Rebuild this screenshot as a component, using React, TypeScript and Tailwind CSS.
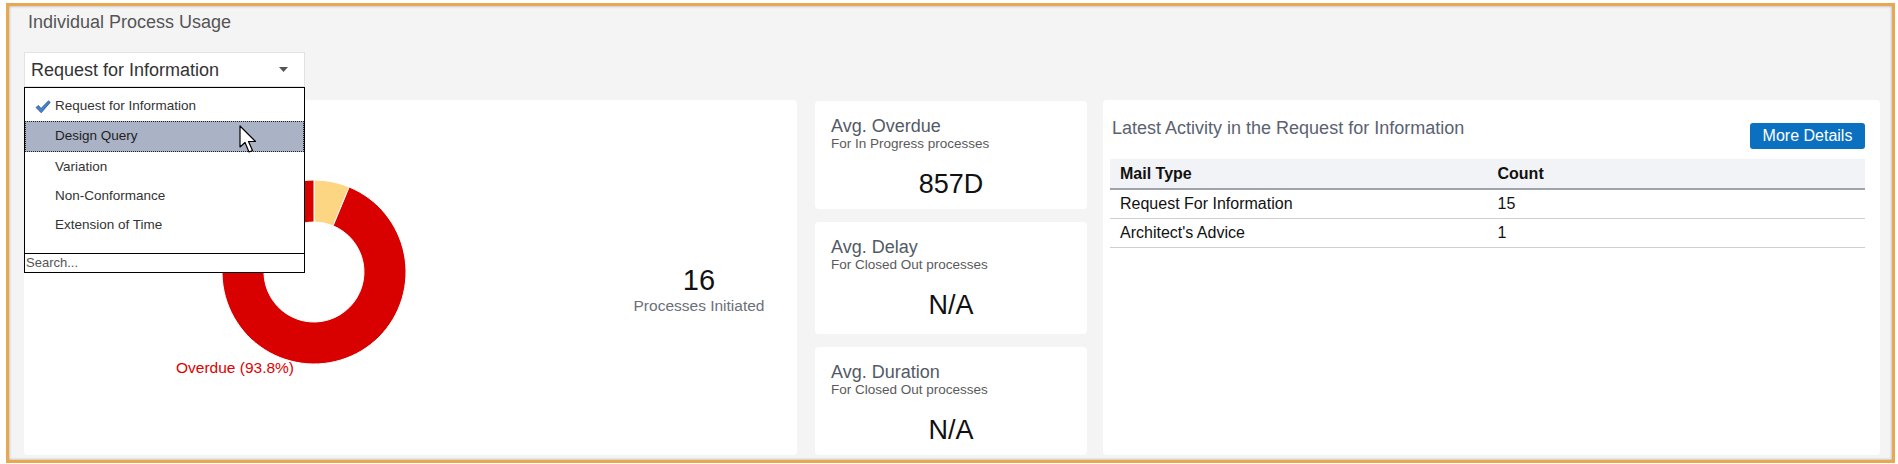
import React from "react";

const font = { fontFamily: '"Liberation Sans", Arial, sans-serif' };

const options = [
  "Request for Information",
  "Design Query",
  "Variation",
  "Non-Conformance",
  "Extension of Time",
];

const rows = [
  { type: "Request For Information", count: 15 },
  { type: "Architect's Advice", count: 1 },
];

const stats = [
  { title: "Avg. Overdue", sub: "For In Progress processes", value: "857D", h: "h-[108px]" },
  { title: "Avg. Delay", sub: "For Closed Out processes", value: "N/A", h: "h-[112px]" },
  { title: "Avg. Duration", sub: "For Closed Out processes", value: "N/A", h: "h-[108px]" },
];

function Check() {
  return (
    <svg width="16" height="14" viewBox="0 0 16 14" className="shrink-0">
      <path
        d="M1 7.5 L3.5 5.5 L6 8.5 L13.5 0.8 L15.2 2.4 L6.2 12.8 Z"
        fill="#4a7fcb"
        stroke="#2a579c"
        strokeWidth="0.8"
        strokeLinejoin="round"
      />
    </svg>
  );
}

function Cursor() {
  return (
    <svg width="20" height="30" viewBox="0 0 20 30" className="absolute left-[213px] top-[3px]">
      <path
        d="M1 1 L1 22 L6 17.5 L10 27 L13.5 25.5 L9.5 16.5 L16.5 16.5 Z"
        fill="#fff"
        stroke="#000"
        strokeWidth="1.2"
        strokeLinejoin="round"
      />
    </svg>
  );
}

function ProcessSelect() {
  return (
    <div className="relative w-[281px]">
      <div className="flex h-[35px] items-center justify-between border border-[#e2e2e2] bg-white pl-[6px] pr-[16px]">
        <span className="text-[18px] leading-[20px] text-[#333]">Request for Information</span>
        <svg width="9" height="5" viewBox="0 0 9 5">
          <path d="M0 0 L9 0 L4.5 5 Z" fill="#555" />
        </svg>
      </div>
      <div className="absolute left-0 top-[35px] z-10 w-[281px] border border-black bg-white">
        <div className="pt-[4px] text-[13.5px] text-[#333]">
          <div className="flex h-[29px] items-center gap-[4px] pl-[10px]">
            <Check />
            <span>{options[0]}</span>
          </div>
          <div className="relative flex h-[31px] items-center border border-dotted border-[#222] bg-[#aab3c5] pl-[29px] text-[#222]">
            {options[1]}
            <Cursor />
          </div>
          <div className="flex h-[30px] items-center pl-[30px]">{options[2]}</div>
          <div className="flex h-[29px] items-center pl-[30px]">{options[3]}</div>
          <div className="flex h-[29px] items-center pl-[30px]">{options[4]}</div>
          <div className="h-[13px]" />
        </div>
        <div className="flex h-[19px] items-center border-t border-black pl-[1px] text-[13px] text-[#555]">
          Search...
        </div>
      </div>
    </div>
  );
}

function Donut() {
  return (
    <svg width="580" height="355" viewBox="0 0 580 355">
      <path
        d="M290 80 A92 92 0 0 1 325.21 87 L309.13 125.81 A50 50 0 0 0 290 122 Z"
        fill="#fcd683"
        stroke="#fff"
        strokeWidth="1"
      />
      <path
        d="M325.21 87 A92 92 0 1 1 290 80 L290 122 A50 50 0 1 0 309.13 125.81 Z"
        fill="#d90000"
        stroke="#fff"
        strokeWidth="1"
      />
      <text x="152" y="272.5" fontSize="15.5" fill="#e10000" style={font}>
        Overdue (93.8%)
      </text>
    </svg>
  );
}

export default function App() {
  return (
    <div className="h-[464px] w-[1898px] bg-white" style={font}>
      <div className="ml-[6px] mt-[3px] h-[460px] w-[1889px] border-[3px] border-[#e9a84f] bg-[#f4f4f4] shadow-[inset_0_0_3px_rgba(0,0,0,0.35)]">
        <div className="mr-[12px] h-[30px] pl-[19px] pt-[6px] text-[18px] leading-[20px] text-[#555]">
          Individual Process Usage
        </div>

        <div className="mt-[16px] pl-[15px]">
          <ProcessSelect />
        </div>

        <div className="mt-[13px] flex h-[355px] pl-[15px] pr-[12px]">
          <div className="flex w-[773px] rounded-[4px] bg-white">
            <div className="w-[580px]">
              <Donut />
            </div>
            <div className="flex flex-1 flex-col items-center pt-[164px] pr-[3px]">
              <div className="text-[29px] leading-[32px] text-[#111]">16</div>
              <div className="text-[15.5px] leading-[20px] text-[#6b7079]">Processes Initiated</div>
            </div>
          </div>

          <div className="ml-[18px] flex w-[272px] flex-col gap-[13px] pt-[1px]">
            {stats.map((s) => (
              <div key={s.title} className={`${s.h} rounded-[4px] bg-white px-4 pt-[15px]`}>
                <div className="text-[18px] leading-[20px] text-[#525a66]">{s.title}</div>
                <div className="text-[13.5px] leading-[16px] text-[#5a5a5a]">{s.sub}</div>
                <div className="mt-[17px] text-center text-[27px] leading-[30px] text-[#111]">{s.value}</div>
              </div>
            ))}
          </div>

          <div className="ml-[16px] flex-1 rounded-[4px] bg-white pl-[7px] pr-[15px] pt-[18px]">
            <div className="flex items-start justify-between">
              <div className="pl-[2px] text-[18px] leading-[20px] text-[#5b6270]">
                Latest Activity in the Request for Information
              </div>
              <button className="mt-[5px] h-[26px] w-[115px] rounded-[3px] bg-[#0a70bf] text-[16px] leading-[26px] text-white">
                More Details
              </button>
            </div>
            <table className="mt-[10px] w-full border-collapse text-[16px] text-[#111]">
              <thead>
                <tr className="h-[30px] border-b-2 border-[#9ea3b0] bg-[#f2f3f6]">
                  <th className="w-1/2 pl-[10px] text-left font-bold">Mail Type</th>
                  <th className="pl-[10px] text-left font-bold">Count</th>
                </tr>
              </thead>
              <tbody>
                {rows.map((r) => (
                  <tr key={r.type} className="h-[29px] border-b border-[#cfcfcf]">
                    <td className="pl-[10px]">{r.type}</td>
                    <td className="pl-[10px]">{r.count}</td>
                  </tr>
                ))}
              </tbody>
            </table>
          </div>
        </div>
      </div>
    </div>
  );
}
